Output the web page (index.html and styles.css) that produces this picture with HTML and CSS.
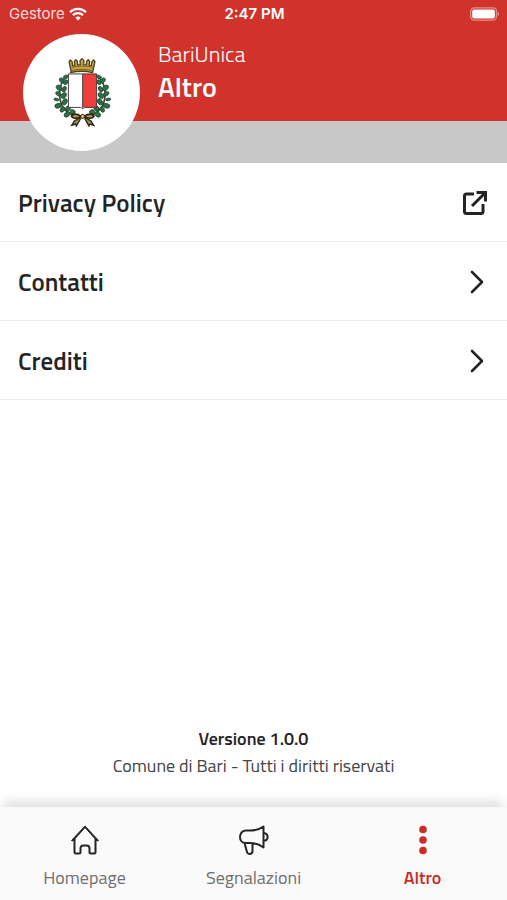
FILE: index.html
```html
<!DOCTYPE html>
<html lang="it">
<head>
<meta charset="utf-8">
<meta name="viewport" content="width=device-width, initial-scale=1">
<title>BariUnica - Altro</title>
<link rel="stylesheet" href="styles.css">
</head>
<body>
<header class="header">
  <div class="status">
    <div class="carrier">
      <span>Gestore</span>
      <svg class="wifi" viewBox="0 0 18 14" aria-hidden="true">
        <path d="M1 5.2a11.5 11.5 0 0 1 16 0M3.9 8.2a7.3 7.3 0 0 1 10.2 0" fill="none" stroke="currentColor" stroke-width="2.2"/>
        <path d="M9 13.6 6.3 10.8a3.9 3.9 0 0 1 5.4 0z" fill="currentColor"/>
      </svg>
    </div>
    <time class="clock">2:47 PM</time>
    <svg class="battery" viewBox="0 0 31 14" aria-hidden="true">
      <rect x=".7" y=".7" width="26.600" height="12.600" rx="3.600" fill="none" stroke="#fff" stroke-opacity=".45" stroke-width="1.300"/>
      <rect x="2.300" y="2.300" width="23.400" height="9.400" rx="2" fill="#fff"/>
      <path d="M28.500 4.600v4.800c2-.8 2-4 0-4.800z" fill="#fff" fill-opacity=".45"/>
    </svg>
  </div>
  <div class="identity">
    <div class="badge">
      <svg class="crest" viewBox="38 38 174 208" aria-hidden="true">
        <defs>
          <g id="leaves" stroke="#1c4029" stroke-width="2">
            <path d="M78 94C58 112 50 150 66 184c8 16 22 24 42 28" fill="none" stroke="#3a4a2d" stroke-width="5"/>
            <g fill="#2f6e46">
              <ellipse cx="76" cy="95" rx="8" ry="5" transform="rotate(-25 76 95)"/>
              <ellipse cx="64" cy="106" rx="9" ry="6" transform="rotate(50 64 106)"/>
              <ellipse cx="76" cy="111" rx="8" ry="6" transform="rotate(-50 76 111)"/>
              <ellipse cx="56" cy="128" rx="10" ry="7" transform="rotate(40 56 128)"/>
              <ellipse cx="71" cy="132" rx="9" ry="6" transform="rotate(-60 71 132)"/>
              <ellipse cx="54" cy="146" rx="9" ry="6" transform="rotate(30 54 146)"/>
              <ellipse cx="70" cy="151" rx="10" ry="7" transform="rotate(-50 70 151)"/>
              <ellipse cx="48" cy="163" rx="8" ry="4" transform="rotate(10 48 163)"/>
              <ellipse cx="73" cy="170" rx="10" ry="7" transform="rotate(-60 73 170)"/>
              <ellipse cx="53" cy="182" rx="10" ry="7" transform="rotate(-15 53 182)"/>
              <ellipse cx="83" cy="190" rx="9" ry="7" transform="rotate(-50 83 190)"/>
              <ellipse cx="66" cy="193" rx="9" ry="6" transform="rotate(-60 66 193)"/>
              <ellipse cx="80" cy="208" rx="10" ry="7" transform="rotate(-40 80 208)"/>
              <ellipse cx="97" cy="200" rx="8" ry="6" transform="rotate(20 97 200)"/>
            </g>
          </g>
        </defs>
        <use href="#leaves"/>
        <use href="#leaves" transform="translate(252 0) scale(-1 1)"/>
        <path d="M93 82 86 49l4-5 5 5 2 12 6-1-1-12 4-5 5 5 1 11 8-1-1-12 6-6 6 6-1 12 8 1 1-11 5-5 4 5-1 12 6 1 2-12 5-5 4 5-7 33c-20-5-45-5-67 0z" fill="#c6a443" stroke="#4e421f" stroke-width="4" stroke-linejoin="round"/>
        <path d="M94 66c20-5 44-5 65 0M93 76c21-5 45-5 66 0" fill="none" stroke="#7c6320" stroke-width="3"/>
        <path d="M84 86h43v102H84z" fill="#fff"/>
        <path d="M127 86h42v101h-42z" fill="#ee3d3b"/>
        <path d="M84 86h85v101h-36l-6 4-6-4H84zM127 86v102" fill="none" stroke="#4a3d41" stroke-width="3"/>
        <path d="M123 214c-14-9-27-9-30 0 5 8 20 7 30 0zM131 214c14-9 27-9 30 0-5 8-20 7-30 0z" fill="#b89a42" stroke="#29231b" stroke-width="5"/>
        <path d="m122 216-20 12-8 13 12-4 2 6 13-23M132 216l20 12 8 13-12-4-2 6-13-23" fill="#a08a50" stroke="#29231b" stroke-width="4"/>
        <circle cx="127" cy="214" r="6" fill="#e2c75c" stroke="#29231b" stroke-width="3"/>
      </svg>
    </div>
    <div class="titles">
      <p class="app-name">BariUnica</p>
      <h1 class="page-title">Altro</h1>
    </div>
  </div>
</header>
<div class="strip"></div>
<main class="content">
  <ul class="menu">
    <li><a class="row" href="#privacy"><span>Privacy Policy</span>
      <svg class="row-icon" viewBox="0 0 26 26" aria-hidden="true">
        <path d="M12 4H4.500Q2.500 4 2.500 6v15.500q0 2 2 2H19q2 0 2-2V14" fill="none" stroke="currentColor" stroke-width="3"/>
        <path d="M10 16 23 3M14.500 2.500H23.500V11.500" fill="none" stroke="currentColor" stroke-width="3"/>
      </svg></a></li>
    <li><a class="row" href="#contatti"><span>Contatti</span>
      <svg class="row-icon" viewBox="0 0 26 26" aria-hidden="true"><path d="m10 3 10 10-10 10" fill="none" stroke="currentColor" stroke-width="2.600" stroke-linecap="round" stroke-linejoin="round"/></svg></a></li>
    <li><a class="row" href="#crediti"><span>Crediti</span>
      <svg class="row-icon" viewBox="0 0 26 26" aria-hidden="true"><path d="m10 3 10 10-10 10" fill="none" stroke="currentColor" stroke-width="2.600" stroke-linecap="round" stroke-linejoin="round"/></svg></a></li>
  </ul>
  <div class="about">
    <p class="version">Versione 1.0.0</p>
    <p>Comune di Bari - Tutti i diritti riservati</p>
  </div>
</main>
<nav class="tabs">
  <a class="tab" href="#home">
    <svg class="tab-icon" viewBox="0 0 30 30" aria-hidden="true">
      <path d="M4.500 14v13q0 1.500 1.500 1.500h3q1.500 0 1.500-1.500v-3.500q0-3 3-3h3q3 0 3 3V27q0 1.500 1.500 1.500h3q1.500 0 1.500-1.500V14" fill="none" stroke="currentColor" stroke-width="2"/>
      <path d="m1.500 15.500 1.500.5L15 2.500 27 16l1.500-.5L15 1z" fill="currentColor" stroke="currentColor" stroke-width="1" stroke-linejoin="round"/>
    </svg>
    <span>Homepage</span>
  </a>
  <a class="tab" href="#segnalazioni">
    <svg class="tab-icon" viewBox="0 0 30 30" aria-hidden="true">
      <path d="M24.500 1.500v21C20 19 16 18 11 18H6.500C3 18 1 15 1 12s2-6.500 5.500-6.500H11c5 0 9-.5 13.500-4zM24.500 8c5.500.5 5.500 7.500 0 8M5.500 18 8 27c.8 3 5.500 2.500 5.500-1v-8" fill="none" stroke="currentColor" stroke-width="2" stroke-linejoin="round"/>
    </svg>
    <span>Segnalazioni</span>
  </a>
  <a class="tab tab-active" href="#altro" aria-current="page">
    <svg class="tab-icon" viewBox="0 0 30 30" aria-hidden="true"><g fill="currentColor"><circle cx="15" cy="4.500" r="3.800"/><circle cx="15" cy="15" r="3.800"/><circle cx="15" cy="25.500" r="3.800"/></g></svg>
    <span>Altro</span>
  </a>
</nav>
</body>
</html>
```
FILE: styles.css
```css
* {
  box-sizing: border-box;
}

body {
  margin: 0;
  min-height: 100vh;
  display: flex;
  flex-direction: column;
  background: #fff;
  color: #242424;
  font-family: "Titillium Web", "Noto Sans", sans-serif;
}

p,
h1,
ul {
  margin: 0;
  padding: 0;
}

a {
  color: inherit;
  text-decoration: none;
}

.header {
  position: relative;
  z-index: 1;
  height: 121px;
  background: #d0332c;
  color: #fff;
}

.status {
  display: grid;
  grid-template-columns: 1fr auto 1fr;
  align-items: center;
  height: 28px;
  padding: 0 7px 0 9px;
  font: 15px/28px Inter, sans-serif;
}

.carrier {
  display: flex;
  align-items: center;
  gap: 4px;
  color: #f8dcda;
}

.wifi {
  width: 18px;
  height: 14px;
  color: #fff;
}

.clock {
  font-weight: 600;
}

.battery {
  justify-self: end;
  width: 30px;
  height: 14px;
}

.identity {
  display: flex;
  gap: 18px;
  padding: 6px 23px 0;
}

.badge {
  flex: none;
  display: flex;
  align-items: center;
  justify-content: center;
  width: 117px;
  height: 117px;
  border-radius: 50%;
  background: #fff;
}

.crest {
  width: 58px;
  height: 69px;
}

.titles {
  padding-top: 4px;
}

.app-name {
  font-size: 22px;
  font-weight: 300;
  line-height: 32px;
}

.page-title {
  font-size: 28px;
  font-weight: 600;
  line-height: 34px;
}

.strip {
  height: 42px;
  background: #c8c8c8;
}

.content {
  flex: 1;
  display: flex;
  flex-direction: column;
  justify-content: space-between;
}

.menu {
  list-style: none;
}

.row {
  display: flex;
  align-items: center;
  justify-content: space-between;
  height: 79px;
  padding: 1px 19px 0 18px;
  border-bottom: 1px solid #ececec;
  font-size: 25px;
  font-weight: 600;
}

.row-icon {
  width: 26px;
  height: 26px;
}

.about {
  padding-bottom: 28px;
  color: #444;
  font-size: 18px;
  font-weight: 400;
  line-height: 27px;
  text-align: center;
}

.version {
  color: #242424;
  font-weight: 600;
}

.tabs {
  display: grid;
  grid-template-columns: repeat(3, 1fr);
  height: 93px;
  background: #fafafa;
  box-shadow: 0 -10px 10px -4px rgba(0, 0, 0, 0.12);
}

.tab {
  display: flex;
  flex-direction: column;
  align-items: center;
  gap: 10px;
  padding-top: 18px;
  color: #707070;
  font-size: 18px;
  line-height: 26px;
}

.tab-icon {
  width: 30px;
  height: 30px;
  color: #242424;
}

.tab-active,
.tab-active .tab-icon {
  color: #c82d28;
}

.tab-active {
  font-weight: 600;
}
```
